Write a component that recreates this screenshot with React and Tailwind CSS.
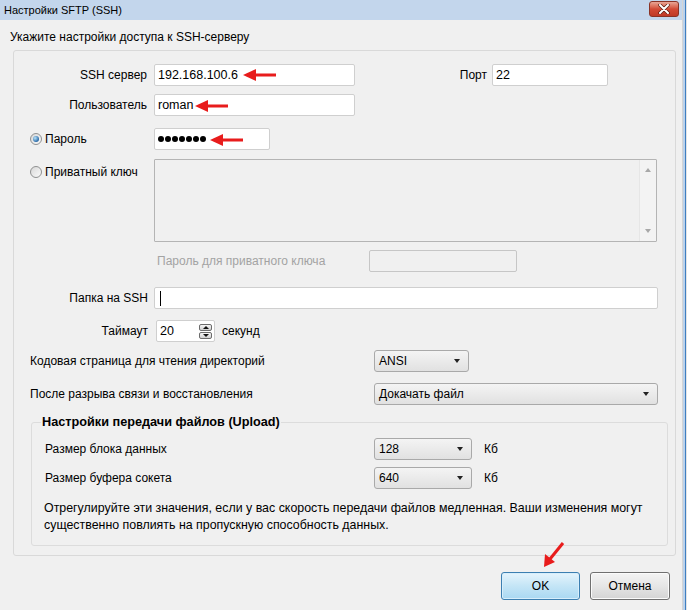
import React from "react";

function Arrow({ className }) {
  // red pointing-left arrow drawn over screenshot
  return (
    <svg className={className} width="34" height="12" viewBox="0 0 34 12">
      <polygon points="0,6 13,0 13,12" fill="#e81c1c" />
      <rect x="11" y="4.5" width="22" height="3" fill="#e81c1c" />
    </svg>
  );
}

function Radio({ checked }) {
  return (
    <span className="w-[12px] h-[12px] rounded-full border border-[#8f9090] bg-gradient-to-br from-[#d8d8d8] to-[#fafafa] flex items-center justify-center shrink-0">
      {checked && (
        <span className="w-[6px] h-[6px] rounded-full bg-[radial-gradient(circle_at_35%_35%,#b9e4fb,#2a6aa8_70%,#1a4a7a)]" />
      )}
    </span>
  );
}

function Input({ width, children, className = "" }) {
  return (
    <div
      className={`relative h-[22px] bg-white border border-[#cfcfcf] rounded-[2px] flex items-center pl-[3px] text-[12.5px] ${className}`}
      style={{ width }}
    >
      {children}
    </div>
  );
}

function Select({ width, value }) {
  return (
    <div
      className="h-[22px] border border-[#a9a9a9] rounded-[3px] bg-gradient-to-b from-[#f4f4f4] to-[#e1e1e1] flex items-center justify-between pl-[4px] pr-[8px]"
      style={{ width }}
    >
      <span>{value}</span>
      <span className="w-0 h-0 border-l-[3.5px] border-r-[3.5px] border-t-[4px] border-l-transparent border-r-transparent border-t-[#222]" />
    </div>
  );
}

export default function App() {
  return (
    <div className="w-[687px] h-[610px] flex overflow-hidden bg-[#f0f0f0] text-[12px] text-black font-['Liberation_Sans',Arial,sans-serif]">
      <div className="w-[682px] flex flex-col">
        {/* title bar */}
        <div className="h-[20px] bg-[#c3d6ec] flex items-start justify-between pl-[4px] pr-[3px]">
          <span className="text-[11px] leading-[20px]">Настройки SFTP (SSH)</span>
          <button className="mt-[1px] w-[30px] h-[16px] rounded-[3px] border border-[#8a3326] bg-gradient-to-b from-[#e8a595] via-[#d24a35] to-[#c03a27] flex items-center justify-center">
            <svg width="12" height="10" viewBox="0 0 12 10">
              <path d="M2 1 L10 9 M10 1 L2 9" stroke="#5a1d14" strokeWidth="3.4" strokeLinecap="round" />
              <path d="M2 1 L10 9 M10 1 L2 9" stroke="#fff" strokeWidth="2" strokeLinecap="round" />
            </svg>
          </button>
        </div>

        <div className="flex-1 flex flex-col">
          <div className="ml-[10px] mt-[9px] h-[17px] leading-[17px]">Укажите настройки доступа к SSH-серверу</div>

          {/* main panel */}
          <div className="ml-[13px] mt-[4px] w-[663px] h-[506px] border border-[#d9d9d9] rounded-[3px] pt-[13px] flex flex-col">
            {/* SSH server + port */}
            <div className="flex items-center h-[22px]">
              <div className="w-[133px] text-right">SSH сервер</div>
              <Input width={201} className="ml-[7px]">
                <span>192.168.100.6</span>
                <Arrow className="absolute left-[88px] top-[4px]" />
              </Input>
              <div className="w-[132px] text-right">Порт</div>
              <Input width={116} className="ml-[5px]">
                <span>22</span>
              </Input>
            </div>

            {/* user */}
            <div className="flex items-center h-[22px] mt-[8px]">
              <div className="w-[133px] text-right">Пользователь</div>
              <Input width={201} className="ml-[7px]">
                <span>roman</span>
                <Arrow className="absolute left-[40px] top-[5px]" />
              </Input>
            </div>

            {/* password */}
            <div className="flex items-center h-[22px] mt-[12px]">
              <div className="w-[133px] pl-[16px] flex items-center gap-[3px]">
                <Radio checked />
                <span>Пароль</span>
              </div>
              <Input width={116} className="ml-[7px]">
                <div className="flex gap-[1px]">
                  {[0, 1, 2, 3, 4, 5, 6].map((i) => (
                    <span key={i} className="w-[6px] h-[6px] rounded-full bg-black" />
                  ))}
                </div>
                <Arrow className="absolute left-[55px] top-[5px]" />
              </Input>
            </div>

            {/* private key */}
            <div className="flex items-start mt-[9px]">
              <div className="w-[133px] pl-[16px] pt-[4px] flex items-center gap-[3px]">
                <Radio />
                <span>Приватный ключ</span>
              </div>
              <div className="ml-[7px] w-[503px] h-[83px] border border-[#b4b4b4] rounded-[1px] bg-[#f0f0f0] flex justify-end">
                <div className="w-[17px] border-l border-[#e6e6e6] bg-[#f3f3f3] flex flex-col items-center justify-between py-[8px]">
                  <span className="w-0 h-0 border-l-[3.5px] border-r-[3.5px] border-b-[4px] border-l-transparent border-r-transparent border-b-[#a8a8a8]" />
                  <span className="w-0 h-0 border-l-[3.5px] border-r-[3.5px] border-t-[4px] border-l-transparent border-r-transparent border-t-[#a8a8a8]" />
                </div>
              </div>
            </div>

            {/* key password */}
            <div className="flex items-center h-[22px] mt-[8px]">
              <div className="ml-[143px] w-[212px] text-[#a3a3a3]">Пароль для приватного ключа</div>
              <div className="w-[148px] h-[22px] border border-[#c6c6c6] rounded-[2px] bg-[#f0f0f0]" />
            </div>

            {/* folder */}
            <div className="flex items-center h-[22px] mt-[15px]">
              <div className="w-[134px] text-right">Папка на SSH</div>
              <Input width={504} className="ml-[6px]">
                <span className="ml-[2px] w-[1px] h-[15px] bg-black" />
              </Input>
            </div>

            {/* timeout */}
            <div className="flex items-center h-[22px] mt-[11px]">
              <div className="w-[134px] text-right">Таймаут</div>
              <div className="ml-[8px] w-[59px] h-[22px] bg-white border border-[#cfcfcf] rounded-[2px] flex items-center justify-between pl-[3px] pr-[2px] text-[12.5px]">
                <span>20</span>
                <div className="flex flex-col gap-[1px]">
                  <span className="w-[13px] h-[7px] rounded-[2px] border border-[#6b6b6b] bg-gradient-to-b from-[#f6f6f6] to-[#cfcfcf] flex items-center justify-center">
                    <span className="w-0 h-0 border-l-[3px] border-r-[3px] border-b-[3px] border-l-transparent border-r-transparent border-b-[#111]" />
                  </span>
                  <span className="w-[13px] h-[7px] rounded-[2px] border border-[#6b6b6b] bg-gradient-to-b from-[#f6f6f6] to-[#cfcfcf] flex items-center justify-center">
                    <span className="w-0 h-0 border-l-[3px] border-r-[3px] border-t-[3px] border-l-transparent border-r-transparent border-t-[#111]" />
                  </span>
                </div>
              </div>
              <span className="ml-[7px]">секунд</span>
            </div>

            {/* code page */}
            <div className="flex items-center h-[22px] mt-[8px] pl-[16px]">
              <div className="w-[344px]">Кодовая страница для чтения директорий</div>
              <Select width={95} value="ANSI" />
            </div>

            {/* reconnect */}
            <div className="flex items-center h-[22px] mt-[11px] pl-[16px]">
              <div className="w-[344px]">После разрыва связи и восстановления</div>
              <Select width={284} value="Докачать файл" />
            </div>

            {/* upload group */}
            <fieldset className="ml-[17px] mt-[9px] w-[637px] border border-[#dcdcdc] rounded-[3px] pb-[11px]">
              <legend className="ml-[9px] px-[1px] font-bold text-[12.7px] leading-[16px]">Настройки передачи файлов (Upload)</legend>
              <div className="flex items-center h-[22px] mt-[8px] pl-[13px]">
                <div className="w-[329px]">Размер блока данных</div>
                <Select width={98} value="128" />
                <span className="ml-[12px]">Кб</span>
              </div>
              <div className="flex items-center h-[22px] mt-[7px] pl-[13px]">
                <div className="w-[329px]">Размер буфера сокета</div>
                <Select width={98} value="640" />
                <span className="ml-[12px]">Кб</span>
              </div>
              <p className="mt-[11px] pl-[12px] pr-[6px] text-[12.4px] leading-[17px]">
                Отрегулируйте эти значения, если у вас скорость передачи файлов медленная. Ваши изменения могут
                существенно повлиять на пропускную способность данных.
              </p>
            </fieldset>
          </div>

          {/* buttons */}
          <div className="mt-[16px] flex justify-end gap-[10px] pr-[12px]">
            <div className="relative">
              <button className="w-[79px] h-[28px] rounded-[3px] border border-[#3c7fb1] bg-gradient-to-b from-[#e5f4fc] via-[#c4e5f6] to-[#a9d8f2] shadow-[inset_0_0_0_1px_#d7eefb]">
                OK
              </button>
              <svg className="absolute left-[38px] top-[-32px]" width="30" height="32" viewBox="0 0 30 32">
                <polygon points="5,27 6,14 16,22" fill="#e81c1c" />
                <line x1="11" y1="19" x2="24" y2="3" stroke="#e81c1c" strokeWidth="3" />
              </svg>
            </div>
            <button className="w-[80px] h-[28px] rounded-[3px] border border-[#707070] bg-gradient-to-b from-[#f4f4f4] via-[#e6e6e6] to-[#d4d4d4] shadow-[inset_0_0_0_1px_#fbfbfb]">
              Отмена
            </button>
          </div>
        </div>
      </div>

      {/* window edge */}
      <div className="w-[5px] flex">
        <div className="w-[1px] bg-[#d5d5d5]" />
        <div className="w-[2px] bg-[#bcd2ea]" />
        <div className="w-[1px] bg-[#3f7fc2]" />
        <div className="w-[1px] bg-[#e4e4e4]" />
      </div>
    </div>
  );
}
